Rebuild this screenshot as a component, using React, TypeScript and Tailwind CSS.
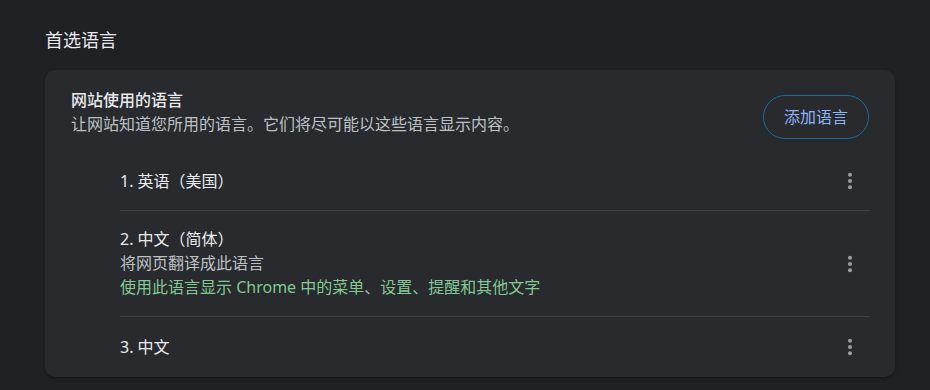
import React from "react";

const font = { fontFamily: '"Noto Sans", "Noto Sans CJK SC", sans-serif' };

const MoreIcon = () => (
  <button className="flex h-10 w-10 items-center justify-center rounded-full">
    <svg width="20" height="20" viewBox="0 0 20 20" fill="#9aa0a6">
      <circle cx="10" cy="3.7" r="2" />
      <circle cx="10" cy="10" r="2" />
      <circle cx="10" cy="16.3" r="2" />
    </svg>
  </button>
);

export default function App() {
  return (
    <div
      className="min-h-screen bg-[#202124] pt-[27px] pl-[45px] pr-[35px] text-[16px] text-[#e8eaed]"
      style={font}
    >
      <h2 className="text-[18px] leading-[26px] font-normal text-[#e8eaed]">首选语言</h2>

      <div className="mt-[17px] rounded-[10px] bg-[#292a2d] shadow-[0_1px_3px_rgba(0,0,0,0.35)]">
        {/* header */}
        <div className="flex justify-between px-[26px] pt-[18px] pb-[12px]">
          <div>
            <div className="leading-6 font-medium text-[#e8eaed]">网站使用的语言</div>
            <div className="leading-6 text-[#bdc1c6]">让网站知道您所用的语言。它们将尽可能以这些语言显示内容。</div>
          </div>
          <button className="mt-[7px] h-[44px] w-[106px] rounded-full border border-[#1d6c99] text-[16px] text-[#8ab4f8]">
            添加语言
          </button>
        </div>

        {/* languages */}
        <div className="pl-[75px] pr-[25px]">
          <div className="flex h-[60px] items-center justify-between border-b border-[#3f4042]">
            <span className="leading-6">1. 英语（美国）</span>
            <MoreIcon />
          </div>

          <div className="flex items-center justify-between border-b border-[#3f4042] py-4">
            <div>
              <div className="leading-6">2. 中文（简体）</div>
              <div className="leading-6 text-[#bdc1c6]">将网页翻译成此语言</div>
              <div className="leading-[25px] text-[#81c995]">使用此语言显示 Chrome 中的菜单、设置、提醒和其他文字</div>
            </div>
            <MoreIcon />
          </div>

          <div className="flex h-[60px] items-center justify-between">
            <span className="leading-6">3. 中文</span>
            <MoreIcon />
          </div>
        </div>
      </div>
    </div>
  );
}
